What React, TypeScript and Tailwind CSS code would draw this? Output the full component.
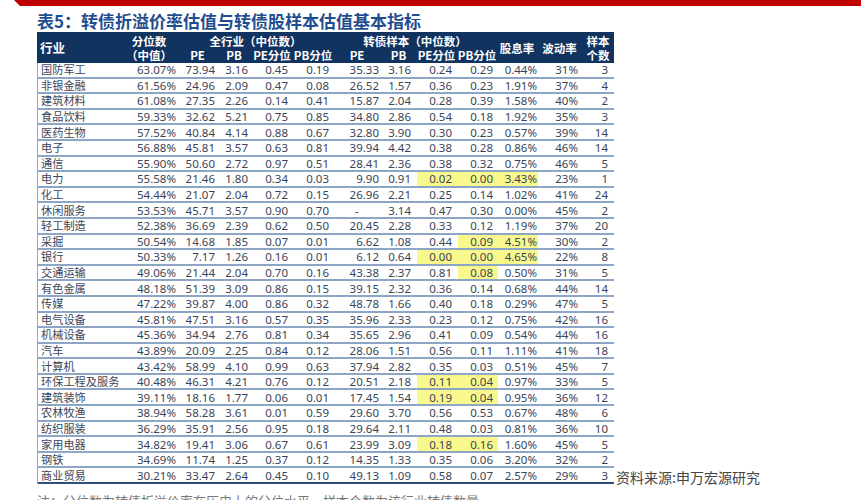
type Row = {
  name: string;
  v: string[];
  hl?: number[];
};

const rows: Row[] = [
  { name: "国防军工", v: ["63.07%", "73.94", "3.16", "0.45", "0.19", "35.33", "3.16", "0.24", "0.29", "0.44%", "31%", "3"] },
  { name: "非银金融", v: ["61.56%", "24.96", "2.09", "0.47", "0.08", "26.52", "1.57", "0.36", "0.23", "1.91%", "37%", "4"] },
  { name: "建筑材料", v: ["61.08%", "27.35", "2.26", "0.14", "0.41", "15.87", "2.04", "0.28", "0.39", "1.58%", "40%", "2"] },
  { name: "食品饮料", v: ["59.33%", "32.62", "5.21", "0.75", "0.85", "34.80", "2.86", "0.54", "0.18", "1.92%", "35%", "3"] },
  { name: "医药生物", v: ["57.52%", "40.84", "4.14", "0.88", "0.67", "32.80", "3.90", "0.30", "0.23", "0.57%", "39%", "14"] },
  { name: "电子", v: ["56.88%", "45.81", "3.57", "0.63", "0.81", "39.94", "4.42", "0.38", "0.28", "0.86%", "46%", "14"] },
  { name: "通信", v: ["55.90%", "50.60", "2.72", "0.97", "0.51", "28.41", "2.36", "0.38", "0.32", "0.75%", "46%", "5"] },
  { name: "电力", v: ["55.58%", "21.46", "1.80", "0.34", "0.03", "9.90", "0.91", "0.02", "0.00", "3.43%", "23%", "1"], hl: [7, 8, 9] },
  { name: "化工", v: ["54.44%", "21.07", "2.04", "0.72", "0.15", "26.96", "2.21", "0.25", "0.14", "1.02%", "41%", "24"] },
  { name: "休闲服务", v: ["53.53%", "45.71", "3.57", "0.90", "0.70", "-", "3.14", "0.47", "0.30", "0.00%", "45%", "2"] },
  { name: "轻工制造", v: ["52.38%", "36.69", "2.39", "0.62", "0.50", "20.45", "2.28", "0.33", "0.12", "1.19%", "37%", "20"] },
  { name: "采掘", v: ["50.54%", "14.68", "1.85", "0.07", "0.01", "6.62", "1.08", "0.44", "0.09", "4.51%", "30%", "2"], hl: [8, 9] },
  { name: "银行", v: ["50.33%", "7.17", "1.26", "0.16", "0.01", "6.12", "0.64", "0.00", "0.00", "4.65%", "22%", "8"], hl: [7, 8, 9] },
  { name: "交通运输", v: ["49.06%", "21.44", "2.04", "0.70", "0.16", "43.38", "2.37", "0.81", "0.08", "0.50%", "31%", "5"], hl: [8] },
  { name: "有色金属", v: ["48.18%", "51.39", "3.09", "0.86", "0.15", "39.15", "2.32", "0.36", "0.14", "0.68%", "44%", "14"] },
  { name: "传媒", v: ["47.22%", "39.87", "4.00", "0.86", "0.32", "48.78", "1.66", "0.40", "0.18", "0.29%", "47%", "5"] },
  { name: "电气设备", v: ["45.81%", "47.51", "3.16", "0.57", "0.35", "35.96", "2.33", "0.23", "0.12", "0.75%", "42%", "16"] },
  { name: "机械设备", v: ["45.36%", "34.94", "2.76", "0.81", "0.34", "35.65", "2.96", "0.41", "0.09", "0.54%", "44%", "16"] },
  { name: "汽车", v: ["43.89%", "20.09", "2.25", "0.84", "0.12", "28.06", "1.51", "0.56", "0.11", "1.11%", "41%", "18"] },
  { name: "计算机", v: ["43.42%", "58.99", "4.10", "0.99", "0.63", "37.94", "2.82", "0.35", "0.03", "0.51%", "45%", "7"] },
  { name: "环保工程及服务", v: ["40.48%", "46.31", "4.21", "0.76", "0.12", "20.51", "2.18", "0.11", "0.04", "0.97%", "33%", "5"], hl: [7, 8] },
  { name: "建筑装饰", v: ["39.11%", "18.16", "1.77", "0.06", "0.01", "17.45", "1.54", "0.19", "0.04", "0.95%", "36%", "12"], hl: [7, 8] },
  { name: "农林牧渔", v: ["38.94%", "58.28", "3.61", "0.01", "0.59", "29.60", "3.70", "0.56", "0.53", "0.67%", "48%", "6"] },
  { name: "纺织服装", v: ["36.29%", "35.91", "2.56", "0.95", "0.18", "29.64", "2.11", "0.48", "0.03", "0.81%", "36%", "10"] },
  { name: "家用电器", v: ["34.82%", "19.41", "3.06", "0.67", "0.61", "23.99", "3.09", "0.18", "0.16", "1.60%", "45%", "5"], hl: [7, 8] },
  { name: "钢铁", v: ["34.69%", "11.74", "1.25", "0.37", "0.12", "14.35", "1.33", "0.35", "0.06", "3.20%", "32%", "2"] },
  { name: "商业贸易", v: ["30.21%", "33.47", "2.64", "0.45", "0.10", "49.13", "1.09", "0.58", "0.07", "2.57%", "29%", "3"] },
];

// right padding of each value column, to land the numbers where the sheet has them
const pads = [
  "pr-[3px]",
  "pr-[3px]",
  "pr-[4px]",
  "pr-[6px]",
  "pr-[5px]",
  "pr-[3px]",
  "pr-[6px]",
  "pr-[6px]",
  "pr-[5px]",
  "pr-[1px]",
  "pr-[5px]",
  "pr-[7px]",
];

const cols = "grid grid-cols-[83px_58px_39px_34px_42px_40px_48px_35px_41px_40px_40px_45px_32px]";

const TableHeader = () => (
  <div
    className={`${cols} grid-rows-[15px_16px] bg-[#11335f] text-white font-bold text-[11.5px] leading-[14px] whitespace-nowrap font-['Noto_Sans_CJK_SC',sans-serif]`}
  >
    <div className="row-span-2 flex items-center pl-[3px] text-[12.5px]">行业</div>
    <div className="flex items-center justify-center pt-[2px]">分位数</div>
    <div className="col-span-4 flex items-center justify-center pt-[2px]">全行业（中位数）</div>
    <div className="col-span-4 flex items-center justify-center pt-[2px]">转债样本（中位数）</div>
    <div className="row-span-2 flex items-center justify-center">股息率</div>
    <div className="row-span-2 flex items-center justify-center">波动率</div>
    <div className="flex items-center justify-center pt-[2px]">样本</div>
    <div className="flex items-center justify-center">（中值）</div>
    <div className="flex items-center justify-center">PE</div>
    <div className="flex items-center justify-center">PB</div>
    <div className="flex items-center justify-center">PE分位</div>
    <div className="flex items-center justify-center">PB分位</div>
    <div className="flex items-center justify-center">PE</div>
    <div className="flex items-center justify-center">PB</div>
    <div className="flex items-center justify-center">PE分位</div>
    <div className="flex items-center justify-center">PB分位</div>
    <div className="flex items-center justify-center">个数</div>
  </div>
);

const TableRow = ({ row, last }: { row: Row; last: boolean }) => (
  <div
    className={`${cols} h-[15.6px] border-b-2 ${last ? "border-[#2d4f7c]" : "border-[#8ea6c6]"}`}
  >
    <div className="flex items-center pl-[3px] text-[11.2px] text-[#3d4658] whitespace-nowrap min-w-0 overflow-visible">
      {row.name}
    </div>
    {row.v.map((val, i) => (
      <div
        key={i}
        className={`flex items-center ${val === "-" ? "justify-center" : "justify-end"} ${pads[i]} ${
          row.hl?.includes(i) ? "bg-[#f8f88c]" : ""
        }`}
      >
        {val}
      </div>
    ))}
  </div>
);

export default function App() {
  return (
    <div className="w-[861px] h-[500px] overflow-hidden bg-white font-['Noto_Sans','Noto_Sans_CJK_SC',sans-serif]">
      <div className="ml-[14px] h-[6px] bg-[#c00000] [clip-path:polygon(0_0,100%_0,100%_100%,6px_100%)]" />
      <div className="pl-[37px]">
        <h1 className="mt-[4px] h-[22px] text-[17px] leading-[22px] font-bold text-[#1f4e8f] font-['Noto_Sans_CJK_SC',sans-serif]">
          表5：转债折溢价率估值与转债股样本估值基本指标
        </h1>
        <div className="flex items-end">
          <div className="w-[577px]">
            <TableHeader />
            <div className="border-l border-[#8ea6c6] text-[11.5px] leading-[13px] text-[#3b4456]">
              {rows.map((r, i) => (
                <TableRow key={r.name} row={r} last={i === rows.length - 1} />
              ))}
            </div>
          </div>
          <div className="ml-[2px] mb-[-1px] text-[14px] leading-[16px] text-[#444] whitespace-nowrap font-['Noto_Sans_CJK_SC',sans-serif]">
            资料来源:申万宏源研究
          </div>
        </div>
        <div className="mt-[9px] text-[13px] leading-[16px] text-[#777] whitespace-nowrap font-['Noto_Sans_CJK_SC',sans-serif]">
          注：分位数为转债折溢价率在历史上的分位水平，样本个数为该行业转债数量
        </div>
      </div>
    </div>
  );
}
